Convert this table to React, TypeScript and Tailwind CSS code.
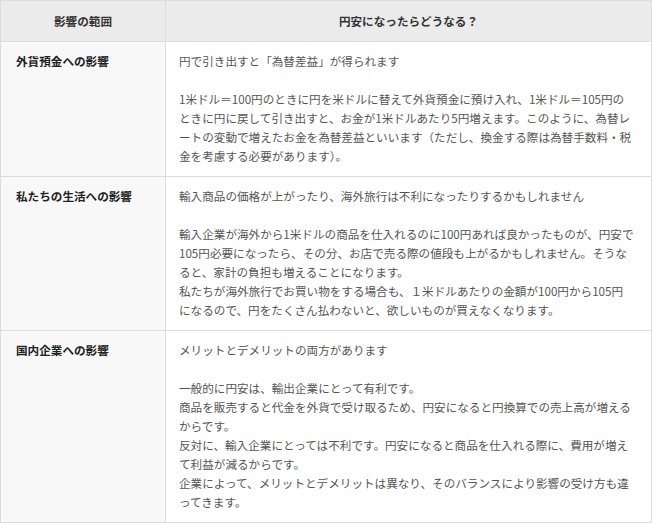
import React from "react";

interface ImpactRow {
  scope: string;
  lead: string;
  lines: string[];
}

const rows: ImpactRow[] = [
  {
    scope: "外貨預金への影響",
    lead: "円で引き出すと「為替差益」が得られます",
    lines: [
      "1米ドル＝100円のときに円を米ドルに替えて外貨預金に預け入れ、1米ドル＝105円の",
      "ときに円に戻して引き出すと、お金が1米ドルあたり5円増えます。このように、為替レ",
      "ートの変動で増えたお金を為替差益といいます（ただし、換金する際は為替手数料・税",
      "金を考慮する必要があります）。",
    ],
  },
  {
    scope: "私たちの生活への影響",
    lead: "輸入商品の価格が上がったり、海外旅行は不利になったりするかもしれません",
    lines: [
      "輸入企業が海外から1米ドルの商品を仕入れるのに100円あれば良かったものが、円安で",
      "105円必要になったら、その分、お店で売る際の値段も上がるかもしれません。そうな",
      "ると、家計の負担も増えることになります。",
      "私たちが海外旅行でお買い物をする場合も、１米ドルあたりの金額が100円から105円",
      "になるので、円をたくさん払わないと、欲しいものが買えなくなります。",
    ],
  },
  {
    scope: "国内企業への影響",
    lead: "メリットとデメリットの両方があります",
    lines: [
      "一般的に円安は、輸出企業にとって有利です。",
      "商品を販売すると代金を外貨で受け取るため、円安になると円換算での売上高が増える",
      "からです。",
      "反対に、輸入企業にとっては不利です。円安になると商品を仕入れる際に、費用が増え",
      "て利益が減るからです。",
      "企業によって、メリットとデメリットは異なり、そのバランスにより影響の受け方も違",
      "ってきます。",
    ],
  },
];

export default function App() {
  return (
    <div className="w-[652px] bg-white font-['Noto_Sans_CJK_JP','Noto_Sans',sans-serif] text-[11.6px] leading-[19px]">
      <table className="w-full table-fixed border-collapse">
        <colgroup>
          <col className="w-[165px]" />
          <col />
        </colgroup>
        <thead>
          <tr className="h-[41px] bg-[#ebebeb]">
            <th className="border border-[#dcdcdc] text-center font-bold text-[#333]">影響の範囲</th>
            <th className="border border-[#dcdcdc] text-center font-bold text-[#333]">円安になったらどうなる？</th>
          </tr>
        </thead>
        <tbody>
          {rows.map((row) => (
            <tr key={row.scope}>
              <td className="border border-[#dcdcdc] bg-[#f8f8f8] px-[15px] pt-[10px] pb-[10px] align-top font-bold text-[#222]">
                {row.scope}
              </td>
              <td className="border border-[#dcdcdc] px-[13px] pt-[10px] pb-[10px] align-top text-[#555]">
                <p>{row.lead}</p>
                <p className="mt-[19px]">
                  {row.lines.map((line, i) => (
                    <React.Fragment key={i}>
                      {i > 0 && <br />}
                      {line}
                    </React.Fragment>
                  ))}
                </p>
              </td>
            </tr>
          ))}
        </tbody>
      </table>
    </div>
  );
}
